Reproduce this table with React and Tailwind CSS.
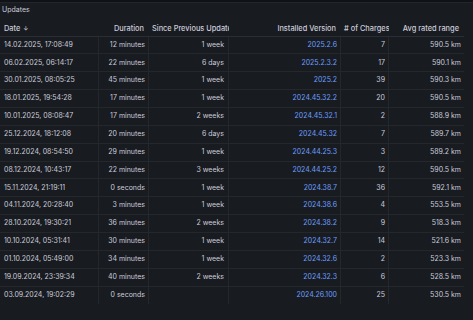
const updates = [
  ["14.02.2025, 17:08:49", "12 minutes", "1 week", "2025.2.6", "7", "590.5 km"],
  ["06.02.2025, 06:14:17", "22 minutes", "6 days", "2025.2.3.2", "17", "590.1 km"],
  ["30.01.2025, 08:05:25", "45 minutes", "1 week", "2025.2", "39", "590.3 km"],
  ["18.01.2025, 19:54:28", "17 minutes", "1 week", "2024.45.32.2", "20", "590.5 km"],
  ["10.01.2025, 08:08:47", "17 minutes", "2 weeks", "2024.45.32.1", "2", "588.9 km"],
  ["25.12.2024, 18:12:08", "20 minutes", "6 days", "2024.45.32", "7", "589.7 km"],
  ["19.12.2024, 08:54:50", "29 minutes", "1 week", "2024.44.25.3", "3", "589.2 km"],
  ["08.12.2024, 10:43:17", "22 minutes", "3 weeks", "2024.44.25.2", "12", "590.5 km"],
  ["15.11.2024, 21:19:11", "0 seconds", "1 week", "2024.38.7", "36", "592.1 km"],
  ["04.11.2024, 20:28:40", "3 minutes", "1 week", "2024.38.6", "4", "553.5 km"],
  ["28.10.2024, 19:30:21", "36 minutes", "2 weeks", "2024.38.2", "9", "518.3 km"],
  ["10.10.2024, 05:31:41", "30 minutes", "1 week", "2024.32.7", "14", "521.6 km"],
  ["01.10.2024, 05:49:00", "34 minutes", "1 week", "2024.32.6", "2", "523.3 km"],
  ["19.09.2024, 23:39:34", "40 minutes", "2 weeks", "2024.32.3", "6", "528.5 km"],
  ["03.09.2024, 19:02:29", "0 seconds", "", "2024.26.100", "25", "530.5 km"],
];

const cols = "grid grid-cols-[99px_50px_80px_112px_48px_75px] w-[464px]";

const App = () => {
  return (
    <section
      className="w-[473px] h-[320px] overflow-hidden bg-[#181b1f] text-[#ccccdc] text-[7px]"
      style={{ fontFamily: "Inter, 'Liberation Sans', sans-serif" }}
    >
      <div className="h-[3px] bg-[#111217] border-b border-[#22252a]" />
      <div className="h-[15px] flex items-center px-[2px]">Updates</div>
      <div
        className={`${cols} h-[18.5px] pt-[3px] items-center border-b border-[#2a2d33] font-medium text-[7.4px]`}
      >
        <div className="pl-[4px] flex items-center gap-[3px]">
          Date <span className="text-[6px]">↓</span>
        </div>
        <div className="text-right pr-[5px]">Duration</div>
        <div className="pl-[3px] pr-[3px] whitespace-nowrap overflow-hidden">
          Since Previous Update
        </div>
        <div className="text-right pr-[5px]">Installed Version</div>
        <div className="pl-[3px] pr-[4px] whitespace-nowrap overflow-hidden">
          # of Charges
        </div>
        <div className="text-right pr-[5px]">Avg rated range</div>
      </div>
      {updates.map((row, index) => (
        <div
          key={index}
          className={`${cols} h-[17.86px] ${
            index < updates.length - 1 ? "border-b border-[#24272c]" : ""
          }`}
        >
          <div className="flex items-center pl-[4px] border-r border-[#24272c]">
            {row[0]}
          </div>
          <div className="flex items-center justify-end pr-[3px] border-r border-[#24272c]">
            {row[1]}
          </div>
          <div className="flex items-center justify-end pr-[4px] border-r border-[#24272c]">
            {row[2]}
          </div>
          <div className="flex items-center justify-end pr-[3px] border-r border-[#24272c] text-[#6e9fff]">
            {row[3]}
          </div>
          <div className="flex items-center justify-end pr-[3px] border-r border-[#24272c]">
            {row[4]}
          </div>
          <div className="flex items-center justify-end pr-[3px]">{row[5]}</div>
        </div>
      ))}
    </section>
  );
};

export default App;
